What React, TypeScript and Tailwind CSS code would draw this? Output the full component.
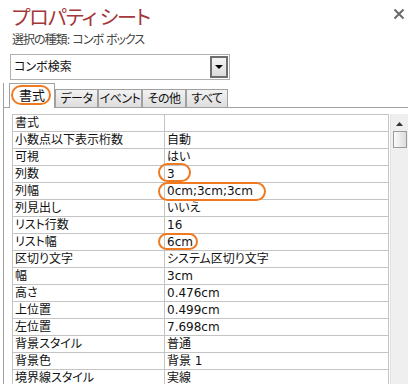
import React from "react";

const rows: [string, string][] = [
  ["書式", ""],
  ["小数点以下表示桁数", "自動"],
  ["可視", "はい"],
  ["列数", "3"],
  ["列幅", "0cm;3cm;3cm"],
  ["列見出し", "いいえ"],
  ["リスト行数", "16"],
  ["リスト幅", "6cm"],
  ["区切り文字", "システム区切り文字"],
  ["幅", "3cm"],
  ["高さ", "0.476cm"],
  ["上位置", "0.499cm"],
  ["左位置", "7.698cm"],
  ["背景スタイル", "普通"],
  ["背景色", "背景 1"],
  ["境界線スタイル", "実線"],
];

const tabs = [
  { label: "データ", w: "w-[43px]" },
  { label: "イベント", w: "w-[44px]" },
  { label: "その他", w: "w-[44px]" },
  { label: "すべて", w: "w-[42px]" },
];

export default function App() {
  return (
    <div className="relative w-[408px] h-[384px] overflow-hidden bg-white text-[12px] text-[#111] [font-family:'DejaVu_Sans','Noto_Sans_CJK_JP',sans-serif] [font-feature-settings:'palt']">
      {/* header */}
      <div className="flex justify-between pl-[12px] pr-[3px] pt-[2px]">
        <div className="text-[20px] leading-[30px] tracking-[-1px] text-[#a4373a] [font-family:'Noto_Sans_CJK_JP',sans-serif]">
          プロパティ シート
        </div>
        <svg width="12" height="12" viewBox="0 0 12 12" className="mt-[6px]">
          <path d="M1.5 1.5 L10.5 10.5 M10.5 1.5 L1.5 10.5" stroke="#6a6a6a" strokeWidth="2" />
        </svg>
      </div>
      <div className="pl-[12px] leading-[16px] tracking-[-1px] text-[#444]">選択の種類: コンボ ボックス</div>

      {/* combo */}
      <div className="ml-[10px] mt-[6px] w-[220px] h-[26px] border border-[#b0b0b0] flex items-center justify-between pl-[3px] pr-[1px]">
        <span className="leading-[16px]">コンボ検索</span>
        <div className="w-[18px] h-[22px] border-2 border-[#6e6e6e] bg-gradient-to-b from-[#f4f4f4] to-[#dcdcdc] flex items-center justify-center">
          <svg width="8" height="4" viewBox="0 0 8 4">
            <path d="M0 0 L8 0 L4 4 Z" fill="#000" />
          </svg>
        </div>
      </div>

      {/* tab control */}
      <div className="ml-[3px] mt-[3px] border-l border-[#a0a0a0] h-[320px]">
        <div className="flex items-end h-[25px] pl-[5px] border-b border-[#a0a0a0]">
          <div className="w-[46px] h-[25px] -mb-px bg-white border border-b-0 border-[#a0a0a0] flex items-center justify-center leading-[16px] text-[13px] whitespace-nowrap">
            書式
          </div>
          {tabs.map((t) => (
            <div
              key={t.label}
              className={`${t.w} h-[18px] border border-b-0 border-[#a0a0a0] bg-gradient-to-b from-[#f2f2f2] to-[#dedede] flex items-center justify-center leading-[16px] text-[12px] tracking-[-0.5px] whitespace-nowrap overflow-hidden`}
            >
              {t.label}
            </div>
          ))}
        </div>

        <div className="flex pl-[8px] pt-[6px]">
          <div className="w-[377px] border-l border-t border-r border-[#c4c4c4]">
            {rows.map(([k, v]) => (
              <div key={k} className="flex h-[17px] border-b border-[#c4c4c4] leading-[16px]">
                <div className="w-[152px] border-r border-[#c4c4c4] pl-[2px] whitespace-nowrap">{k}</div>
                <div className="flex-1 pl-[2px] whitespace-nowrap">{v}</div>
              </div>
            ))}
          </div>
          <div className="w-[18px] h-[280px] ml-[1px] bg-[#efefef] border-l border-[#e4e4e4] flex flex-col items-center">
            <svg width="7" height="4" viewBox="0 0 7 4" className="mt-[8px]">
              <path d="M0 4 L7 4 L3.5 0 Z" fill="#333" />
            </svg>
            <div className="mt-[5px] w-[14px] h-[17px] border border-[#9a9a9a] bg-gradient-to-r from-[#fafafa] to-[#dcdcdc]" />
          </div>
        </div>
      </div>

      {/* orange highlights */}
      <div className="absolute left-[11px] top-[85px] w-[40px] h-[20px] rounded-full border-2 border-[#f07a22]" />
      <div className="absolute left-[158px] top-[163px] w-[33px] h-[19px] rounded-full border-2 border-[#f07a22]" />
      <div className="absolute left-[158px] top-[182px] w-[108px] h-[19px] rounded-full border-2 border-[#f07a22]" />
      <div className="absolute left-[158px] top-[233px] w-[40px] h-[17px] rounded-full border-2 border-[#f07a22]" />
    </div>
  );
}
